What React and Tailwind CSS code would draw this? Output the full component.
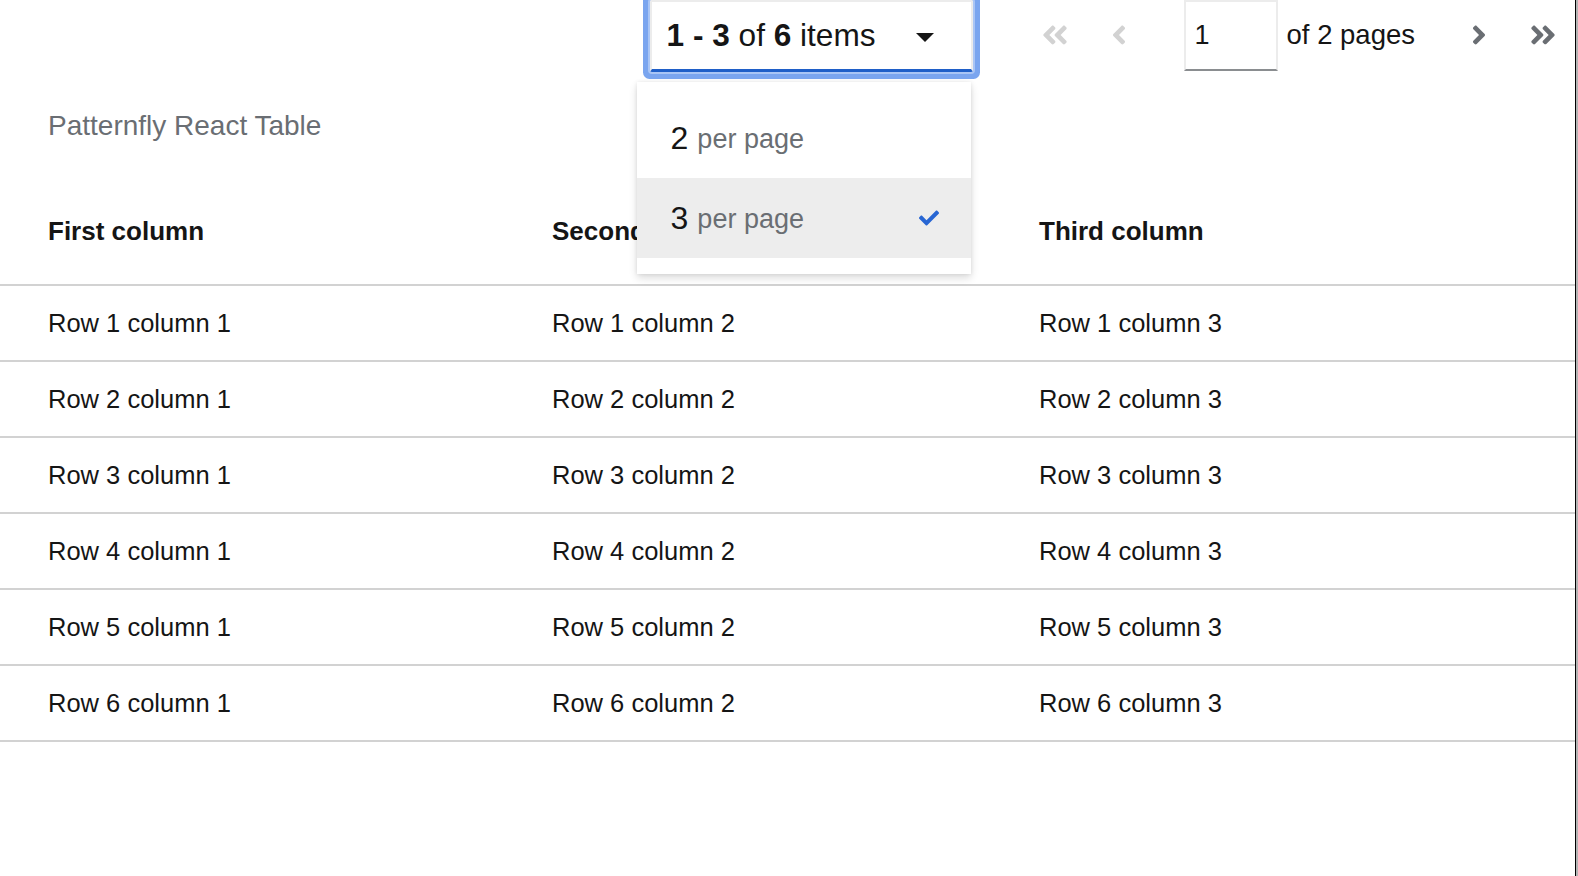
import React from 'react';
import { FaAngleDoubleLeft, FaAngleLeft, FaAngleRight, FaAngleDoubleRight, FaCheck } from 'react-icons/fa';

const rows = [1, 2, 3, 4, 5, 6];

function PerPageToggle() {
  return (
    <div className="relative">
      <div className="h-[72px] w-[323px] flex items-center justify-between pl-[15px] pr-[37px] bg-white border-x-2 border-t-2 border-[#ececec] border-b-[3px] border-b-[#1f5fc8] rounded-[2px] shadow-[0_0_0_2px_#a9c5f5,0_0_0_7px_#7aa5ef]">
        <span className="text-[31.6px] text-[#151515] leading-none mt-[1px]">
          <b>1 - 3</b> of <b>6</b> items
        </span>
        <svg width="18" height="9" viewBox="0 0 18 9" className="mt-[4px]">
          <polygon points="0,0 18,0 9,9" fill="#151515" />
        </svg>
      </div>

      {/* per page menu */}
      <div className="absolute left-[-13px] top-[82px] w-[334px] bg-white py-4 shadow-[0_4px_8px_rgba(3,3,3,0.14),0_0_4px_rgba(3,3,3,0.08)] z-10">
        <div className="h-[80px] flex items-center pl-[34px] pr-[32px]">
          <span className="text-[32px] text-[#151515] leading-none">2</span>
          <span className="ml-[9px] text-[27px] text-[#6a6e73] leading-none mt-[2px]">per page</span>
        </div>
        <div className="h-[80px] flex items-center pl-[34px] pr-[32px] bg-[#ededed]">
          <span className="text-[32px] text-[#151515] leading-none">3</span>
          <span className="ml-[9px] text-[27px] text-[#6a6e73] leading-none mt-[2px]">per page</span>
          <FaCheck className="ml-auto text-[#2866d3]" size={20} />
        </div>
      </div>
    </div>
  );
}

export default function App() {
  return (
    <div className="flex w-[1578px] h-[876px] overflow-hidden bg-white" style={{ fontFamily: '"Liberation Sans", Arial, sans-serif' }}>
      <div className="w-[1575px] relative">
        {/* toolbar / pagination */}
        <div className="h-[72px] flex items-start justify-end">
          <PerPageToggle />
          <button className="ml-[50px] w-[64px] h-[70px] flex items-center justify-center text-[#d2d2d2]">
            <FaAngleDoubleLeft size={30} />
          </button>
          <button className="w-[64px] h-[70px] flex items-center justify-center text-[#d2d2d2]">
            <FaAngleLeft size={30} />
          </button>
          <div className="ml-[33px] w-[94px] h-[71px] border-x-2 border-t-2 border-[#ececec] border-b-2 border-b-[#8a8d90] flex items-center pl-[9px]">
            <span className="text-[27px] text-[#151515] leading-none">1</span>
          </div>
          <div className="ml-[9px] h-[70px] flex items-center text-[27.5px] text-[#151515]">of 2 pages</div>
          <button className="ml-[32px] w-[64px] h-[70px] flex items-center justify-center text-[#6a6e73]">
            <FaAngleRight size={30} />
          </button>
          <button className="w-[64px] h-[70px] flex items-center justify-center text-[#6a6e73]">
            <FaAngleDoubleRight size={30} />
          </button>
        </div>

        <div className="mt-[37px] h-[34px] leading-[34px] pl-[48px] text-[28px] text-[#6a6e73]">Patternfly React Table</div>

        {/* table */}
        <div className="grid grid-cols-[552px_487px_1fr] h-[143px] pt-[71px] border-b-2 border-[#d2d2d2] text-[26px] font-bold text-[#151515] leading-[34px]">
          <div className="pl-[48px]">First column</div>
          <div>Second column</div>
          <div>Third column</div>
        </div>
        {rows.map(r => (
          <div key={r} className="grid grid-cols-[552px_487px_1fr] h-[76px] items-center border-b-2 border-[#d2d2d2] text-[25.5px] text-[#151515]">
            <div className="pl-[48px]">Row {r} column 1</div>
            <div>Row {r} column 2</div>
            <div>Row {r} column 3</div>
          </div>
        ))}
      </div>
      <div className="w-px bg-black" />
      <div className="w-[2px] bg-[#b4b4b4]" />
    </div>
  );
}
